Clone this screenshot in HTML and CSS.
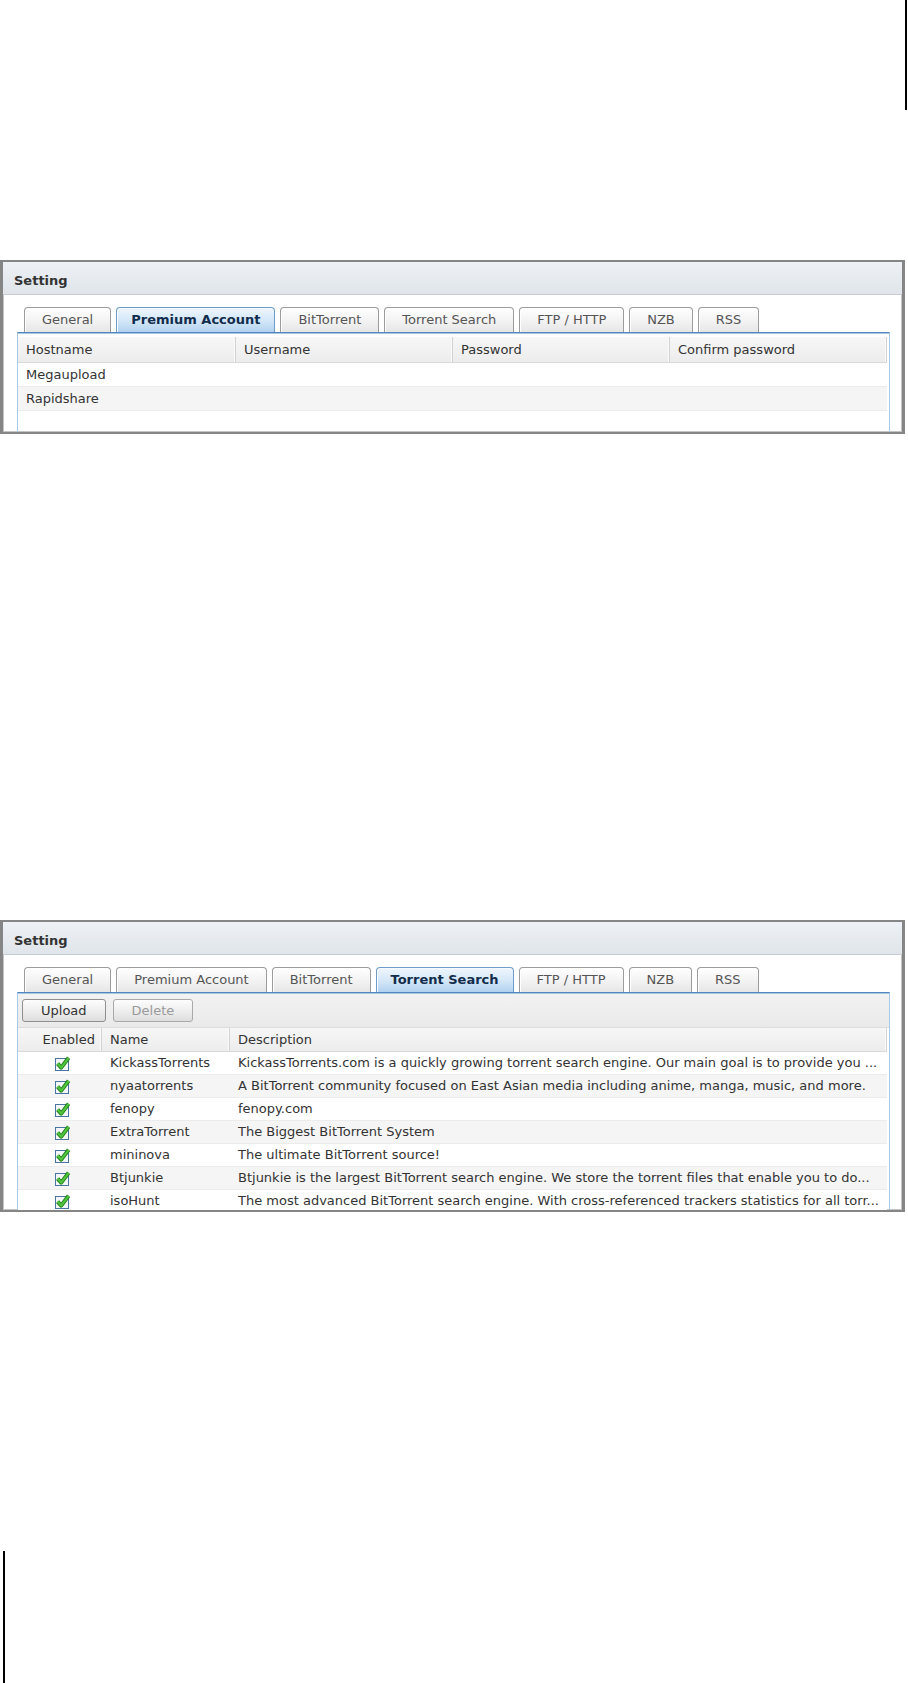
FILE: index.html
```html
<!DOCTYPE html>
<html lang="en">
<head>
    <meta charset="UTF-8">
    <meta name="viewport" content="width=device-width, initial-scale=1.0">
    <title>Download Station - Setting</title>
    <link rel="stylesheet" href="styles.css">
</head>
<body>
    <div class="page-mark-top"></div>

    <!-- Premium Account tab -->
    <div class="panel panel-accounts">
        <div class="panel-title">Setting</div>
        <div class="panel-body">
            <div class="tabs">
                <div class="tab">General</div>
                <div class="tab active">Premium Account</div>
                <div class="tab">BitTorrent</div>
                <div class="tab">Torrent Search</div>
                <div class="tab">FTP / HTTP</div>
                <div class="tab">NZB</div>
                <div class="tab">RSS</div>
            </div>
            <div class="tab-content accounts-content">
                <div class="grid">
                    <div class="grid-head cols-accounts">
                        <div class="cell">Hostname</div>
                        <div class="cell">Username</div>
                        <div class="cell">Password</div>
                        <div class="cell">Confirm password</div>
                    </div>
                    <div class="grid-row cols-accounts">
                        <div class="cell">Megaupload</div>
                        <div class="cell"></div>
                        <div class="cell"></div>
                        <div class="cell"></div>
                    </div>
                    <div class="grid-row alt cols-accounts">
                        <div class="cell">Rapidshare</div>
                        <div class="cell"></div>
                        <div class="cell"></div>
                        <div class="cell"></div>
                    </div>
                </div>
            </div>
        </div>
    </div>

    <!-- Torrent Search tab -->
    <div class="panel panel-search">
        <div class="panel-title">Setting</div>
        <div class="panel-body">
            <div class="tabs">
                <div class="tab">General</div>
                <div class="tab">Premium Account</div>
                <div class="tab">BitTorrent</div>
                <div class="tab active">Torrent Search</div>
                <div class="tab">FTP / HTTP</div>
                <div class="tab">NZB</div>
                <div class="tab">RSS</div>
            </div>
            <div class="tab-content search-content">
                <div class="toolbar">
                    <button class="btn">Upload</button>
                    <button class="btn" disabled>Delete</button>
                </div>
                <div class="grid grid-compact" id="engineGrid">
                    <div class="grid-head cols-search">
                        <div class="cell cell-enabled">Enabled</div>
                        <div class="cell">Name</div>
                        <div class="cell">Description</div>
                    </div>
                </div>
            </div>
        </div>
    </div>

    <div class="page-mark-bottom"></div>

    <script>
        var engines = [
            ['KickassTorrents', 'KickassTorrents.com is a quickly growing torrent search engine. Our main goal is to provide you ...'],
            ['nyaatorrents', 'A BitTorrent community focused on East Asian media including anime, manga, music, and more.'],
            ['fenopy', 'fenopy.com'],
            ['ExtraTorrent', 'The Biggest BitTorrent System'],
            ['mininova', 'The ultimate BitTorrent source!'],
            ['Btjunkie', 'Btjunkie is the largest BitTorrent search engine. We store the torrent files that enable you to do...'],
            ['isoHunt', 'The most advanced BitTorrent search engine. With cross-referenced trackers statistics for all torr...']
        ];

        var checkIcon =
            '<svg class="check" width="16" height="15" viewBox="0 0 16 15">' +
            '<rect x="0.5" y="2.5" width="13" height="12" fill="#f4f6f8" stroke="#4a74a4"/>' +
            '<path d="M2.6 7.6 L6.2 11.6 L13.6 1.8" fill="none" stroke="#23801c" stroke-width="4" stroke-linejoin="round"/>' +
            '<path d="M2.6 7.6 L6.2 11.6 L13.6 1.8" fill="none" stroke="#4fc43c" stroke-width="2.2" stroke-linejoin="round"/>' +
            '</svg>';

        var grid = document.getElementById('engineGrid');
        grid.insertAdjacentHTML('beforeend', engines.map(function (e, i) {
            return '<div class="grid-row cols-search' + (i % 2 ? ' alt' : '') + '">' +
                '<div class="cell cell-check">' + checkIcon + '</div>' +
                '<div class="cell">' + e[0] + '</div>' +
                '<div class="cell">' + e[1] + '</div>' +
                '</div>';
        }).join(''));
    </script>
</body>
</html>
```

FILE: styles.css
```css
body {
    margin: 0;
    background: #fff;
    font-family: "DejaVu Sans", Verdana, sans-serif;
    font-size: 13px;
    color: #333;
}
.page-mark-top {
    width: 905px;
    height: 110px;
    border-right: 2px solid #000;
}
.page-mark-bottom {
    margin: 339px 0 0 3px;
    width: 0;
    height: 132px;
    border-left: 2px solid #000;
}
.panel {
    width: 899px;
    border-style: solid;
    border-color: #858585;
    border-width: 2px 3px 2px 3px;
    box-shadow: inset 0 0 0 1px #c4c4c4;
    background: #fff;
}
.panel-accounts {
    margin-top: 150px;
}
.panel-search {
    margin-top: 486px;
}
.panel-title {
    height: 27px;
    line-height: 27px;
    padding: 5px 0 0 11px;
    font-weight: bold;
    color: #333;
    background: linear-gradient(to bottom, #eef1f5 0%, #dfe5ea 100%);
    border-bottom: 1px solid #c6ccd2;
}
.panel-body {
    padding: 12px 12px 0 14px;
}
.tabs {
    display: flex;
    gap: 5px;
    margin-left: 7px;
    height: 25px;
}
.tab {
    height: 24px;
    line-height: 24px;
    padding: 0 17px;
    border: 1px solid #9c9c9c;
    border-bottom: none;
    border-radius: 4px 4px 0 0;
    background: linear-gradient(to bottom, #ffffff 0%, #f1f1f1 60%, #e6e6e6 100%);
    box-shadow: inset 1px 1px 0 #fff;
    color: #555;
    white-space: nowrap;
}
.tab.active {
    padding: 0 14px;
    font-weight: bold;
    color: #112c4c;
    border-color: #6f9cc8;
    background: linear-gradient(to bottom, #eef6fd 0%, #d3e6f7 55%, #b2d2ef 100%);
    box-shadow: inset 1px 1px 0 #f7fbff;
}
.tab-content {
    border-top: 1px solid #4f86bd;
    box-shadow: inset 0 1px 0 #a9c7e4;
    border-left: 1px solid #a9c9e8;
    border-right: 1px solid #a9c9e8;
    box-sizing: border-box;
    overflow: hidden;
}
.accounts-content {
    height: 100px;
    padding-top: 4px;
}
.search-content {
    height: 218px;
}
.toolbar {
    display: flex;
    gap: 7px;
    height: 34px;
    margin-top: 1px;
    padding: 5px 0 0 4px;
    box-sizing: border-box;
    background: linear-gradient(to bottom, #f2f2f2 0%, #eaeaea 100%);
    border-bottom: 1px solid #dcdcdc;
}
.btn {
    height: 23px;
    padding: 0 18px;
    font-family: inherit;
    font-size: 13px;
    color: #333;
    border: 1px solid #8f8f8f;
    border-radius: 3px;
    background: linear-gradient(to bottom, #fdfdfd 0%, #ededed 55%, #dedede 100%);
    cursor: pointer;
}
.btn:disabled {
    color: #9a9a9a;
    border-color: #a9a9a9;
    cursor: default;
}
.grid {
    margin-right: 2px;
}
.grid-head,
.grid-row {
    display: grid;
    box-sizing: border-box;
}
.grid-head {
    height: 26px;
    line-height: 25px;
    background: linear-gradient(to bottom, #f7f7f7 0%, #ececec 100%);
    border-bottom: 1px solid #d9d9d9;
}
.grid-head .cell {
    border-right: 1px solid #d2d2d2;
    box-shadow: inset -1px 0 0 #fafafa;
}
.grid-row {
    height: 24px;
    line-height: 23px;
    border-bottom: 1px solid #ececec;
    background: #fff;
}
.grid-row.alt {
    background: #f5f5f5;
}
.grid-compact .grid-head {
    height: 24px;
    line-height: 23px;
}
.grid-compact .grid-row {
    height: 23px;
    line-height: 22px;
}
.cols-accounts {
    grid-template-columns: 218px 217px 217px 1fr;
}
.cols-search {
    grid-template-columns: 84px 128px 1fr;
}
.cell {
    padding: 0 8px;
    white-space: nowrap;
    overflow: hidden;
    color: #333;
}
.cell-enabled {
    text-align: right;
    padding-right: 6px;
}
.cell-check {
    display: flex;
    align-items: center;
    padding-left: 37px;
}
.check {
    display: block;
}
```
